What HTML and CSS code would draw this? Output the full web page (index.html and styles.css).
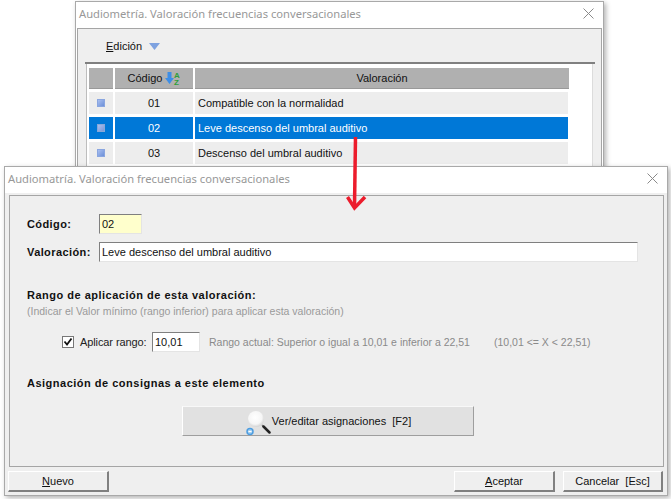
FILE: index.html
```html
<!DOCTYPE html>
<html lang="es">
<head>
<meta charset="utf-8">
<title>Audiometría</title>
<link rel="stylesheet" href="styles.css">
</head>
<body>
<section class="window window-back">
  <header class="titlebar">
    <span class="title">Audiometría. Valoración frecuencias conversacionales</span>
    <svg class="close" width="11" height="11" viewBox="0 0 11 11"><path d="M.5.5l10 10M10.5.5l-10 10" stroke="#8a8a8a" fill="none"/></svg>
  </header>
  <div class="back-panel">
    <div class="menu">
      <span><u>E</u>dición</span>
      <svg width="11" height="7" viewBox="0 0 11 7"><path d="M0 0h11L5.500 7z" fill="#7ea2e0"/></svg>
    </div>
    <div class="table">
      <div class="table-body">
        <div class="row head">
          <div class="cell c1"></div>
          <div class="cell c2"><span>Código</span>
            <svg class="sort" width="15" height="15" viewBox="0 0 15 15">
              <path d="M2.500 1h4v6h2.500L4.500 13 0 7h2.500z" fill="#3d8ee6"/>
              <text x="9" y="6.500" class="az">A</text><text x="9" y="14" class="az">Z</text>
            </svg>
          </div>
          <div class="cell c3">Valoración</div>
        </div>
        <div class="row">
          <div class="cell c1"><i class="bullet"></i></div>
          <div class="cell c2">01</div>
          <div class="cell c3 left">Compatible con la normalidad</div>
        </div>
        <div class="row selected">
          <div class="cell c1"><i class="bullet"></i></div>
          <div class="cell c2">02</div>
          <div class="cell c3 left">Leve descenso del umbral auditivo</div>
        </div>
        <div class="row">
          <div class="cell c1"><i class="bullet"></i></div>
          <div class="cell c2">03</div>
          <div class="cell c3 left">Descenso del umbral auditivo</div>
        </div>
      </div>
    </div>
  </div>
</section>

<section class="window window-front">
  <header class="titlebar">
    <span class="title">Audiomatría. Valoración frecuencias conversacionales</span>
    <svg class="close" width="11" height="11" viewBox="0 0 11 11"><path d="M.5.5l10 10M10.5.5l-10 10" stroke="#8a8a8a" fill="none"/></svg>
  </header>
  <div class="frame">
    <div class="field-row code-row">
      <label class="strong field-label">Código:</label>
      <div class="input code-input">02</div>
    </div>
    <div class="field-row val-row">
      <label class="strong field-label">Valoración:</label>
      <div class="input val-input">Leve descenso del umbral auditivo</div>
    </div>
    <h2 class="strong section-title range-title">Rango de aplicación de esta valoración:</h2>
    <p class="hint">(Indicar el Valor mínimo (rango inferior) para aplicar esta valoración)</p>
    <div class="range-row">
      <svg class="check" width="12" height="12" viewBox="0 0 12 12">
        <rect x=".5" y=".5" width="11" height="11" fill="#fff" stroke="#777"/>
        <path d="M2.500 5.500l2.500 3 4.500-6" stroke="#111" stroke-width="1.800" fill="none"/>
      </svg>
      <span class="range-label">Aplicar rango:</span>
      <div class="input range-input">10,01</div>
      <span class="hint-inline range-actual">Rango actual: Superior o igual a 10,01 e inferior a 22,51</span>
      <span class="hint-inline range-formula">(10,01 &lt;= X &lt; 22,51)</span>
    </div>
    <h2 class="strong section-title assign-title">Asignación de consignas a este elemento</h2>
    <div class="assign-row">
      <button class="btn assign-btn">
        <svg width="26" height="26" viewBox="0 0 26 26">
          <defs>
            <radialGradient id="lens" cx=".45" cy=".4" r=".6">
              <stop offset="0" stop-color="#fff"/>
              <stop offset=".7" stop-color="#f6f6f6"/>
              <stop offset="1" stop-color="#d4d4d4"/>
            </radialGradient>
          </defs>
          <circle cx="11" cy="9" r="8" fill="url(#lens)"/>
          <path d="M17 15l7 7" stroke="#8a8a8a" stroke-width="1.500"/>
          <path d="M18.500 16.500l6 6" stroke="#222" stroke-width="2.500" stroke-linecap="round"/>
          <circle cx="5" cy="21.500" r="3" fill="#a8d2f2" stroke="#4d9de0" stroke-width="1.500"/>
          <path d="M3.500 21.500h3" stroke="#fff"/>
        </svg>
        <span>Ver/editar asignaciones&nbsp; [F2]</span>
      </button>
    </div>
  </div>
  <footer class="actions">
    <button class="btn action"><u>N</u>uevo</button>
    <span class="spacer"></span>
    <button class="btn action"><u>A</u>ceptar</button>
    <button class="btn action action-cancel">Cancelar&nbsp; [Esc]</button>
  </footer>
</section>

<svg class="arrow" width="24" height="76" viewBox="0 0 24 76">
  <path d="M11.500 0L10.500 70" stroke="#ec1c2c" stroke-width="3.500" fill="none"/>
  <path d="M3.500 60l7 11L21 60" stroke="#ec1c2c" stroke-width="3.500" fill="none"/>
</svg>
</body>
</html>
```

FILE: styles.css
```css
* { box-sizing: border-box; }
html, body { margin: 0; height: 100%; }
body {
  position: relative;
  width: 671px;
  height: 499px;
  overflow: hidden;
  background: #fff;
  font-family: "Liberation Sans", Arial, sans-serif;
  font-size: 11px;
  color: #111;
}
.window {
  position: absolute;
  background: #fff;
  border: 1px solid #a9a9a9;
  box-shadow: 2px 2px 5px rgba(0,0,0,.3);
  display: flex;
  flex-direction: column;
}
.window-back { left: 75px; top: 1px; width: 529px; height: 190px; }
.window-front { left: 4px; top: 166px; width: 664px; height: 330px; background: #efefef; }
.titlebar {
  flex: none;
  height: 26px;
  display: flex;
  align-items: center;
  justify-content: space-between;
  background: #fff;
  padding: 0 9px 3px 3px;
  color: #989898;
  font-family: "Noto Sans", sans-serif;
  font-size: 11.200px;
}
.back-panel {
  flex: 1;
  margin: 0 1px;
  background: #efefef;
  border: 1px solid #a5a5a5;
  border-bottom: 0;
}
.menu {
  height: 33px;
  padding: 11px 0 0 28px;
  display: flex;
  align-items: flex-start;
  gap: 7px;
}
.menu svg { margin-top: 3px; }
.table {
  margin-left: 7px;
  width: 510px;
  height: 120px;
  border-top: 2px solid #808080;
}
.table-body {
  height: 100%;
  margin: 0 2px 0 1px;
  background: #fff;
  border-left: 1px solid #bdbdbd;
  border-right: 1px solid #dcdcdc;
  padding: 4px 0 0 2px;
}
.row {
  display: flex;
  gap: 2px;
  height: 22px;
  margin-bottom: 3px;
  line-height: 22px;
}
.cell { background: #ededed; text-align: center; }
.c1 { width: 24px; display: flex; align-items: center; justify-content: center; }
.c2 { width: 78px; }
.c3 { width: 373px; }
.left { text-align: left; padding-left: 3px; }
.head { height: 21px; margin-bottom: 3px; line-height: 21px; }
.head .cell { background: #b0b0b0; border-bottom: 1px solid #999; }
.head .c3 { width: 374px; }
.head .c2 { display: flex; align-items: center; justify-content: center; gap: 3px; }
.sort { flex: none; }
.az { font: bold 8px "Liberation Sans", sans-serif; fill: #2f9e3a; }
.selected .cell { background: #0078d7; color: #fff; }
.bullet {
  display: block;
  width: 8px;
  height: 8px;
  margin-right: 1px;
  background: linear-gradient(135deg, #a9bff0, #6d90d8);
  border: 1px solid #8aa6e0;
}
.selected .bullet { background: linear-gradient(135deg, #a9bff0, #7b98d8); border-color: #87a8d8; }

.frame {
  flex: none;
  height: 272px;
  margin: 2px 3px 0 4px;
  background: #efefef;
  border: 1px solid #a5a5a5;
  padding: 18px 0 0 17px;
}
.field-row { display: flex; align-items: center; height: 20px; }
.code-row { margin-bottom: 8px; }
.field-label { width: 72px; }
.strong { font-weight: bold; font-size: 11px; color: #111; margin: 0; letter-spacing: .4px; }
.section-title { letter-spacing: .5px; }
.input {
  height: 20px;
  background: #fff;
  border: 1px solid;
  border-color: #7f7f7f #e4e4e4 #e4e4e4 #7f7f7f;
  line-height: 18px;
  padding-left: 2px;
  font-size: 11px;
}
.code-input { width: 43px; background: #ffffcc; }
.val-input { width: 539px; }
.range-title { margin-top: 26px; line-height: 14px; }
.hint { margin: 2px 0 0; line-height: 14px; color: #9a9a9a; font-size: 10.500px; }
.range-row { display: flex; align-items: center; height: 20px; margin: 14px 0 0 35px; }
.range-label { margin-left: 6px; width: 72px; color: #222; letter-spacing: -.1px; }
.range-input { width: 48px; }
.hint-inline { color: #8a8a8a; font-size: 10.500px; }
.range-actual { margin-left: 9px; width: 285px; }
.assign-title { margin-top: 24px; line-height: 14px; }
.assign-row { margin: 16px 0 0 155px; }
.btn {
  font: inherit;
  color: #111;
  background: #efefef;
  border: 1px solid;
  border-color: #fff #808080 #808080 #fff;
  padding: 0;
}
.assign-btn {
  width: 292px;
  height: 30px;
  background: #e1e1e1;
  display: flex;
  align-items: center;
  justify-content: center;
  gap: 1px;
  border-bottom: 1px solid #9e9e9e;
  border-right: 1px solid #9e9e9e;
  border-top-color: #f8f8f8;
}
.assign-btn svg { margin-top: 3px; }
.actions { flex: 1; display: flex; gap: 8px; padding: 4px 4px 0 3px; align-items: flex-start; }
.spacer { flex: 1; }
.action {
  width: 101px;
  height: 21px;
  border-right: 2px solid #808080;
  border-bottom: 2px solid #808080;
}
.action-cancel { width: 100px; }
.arrow { position: absolute; left: 344px; top: 137px; }
```
